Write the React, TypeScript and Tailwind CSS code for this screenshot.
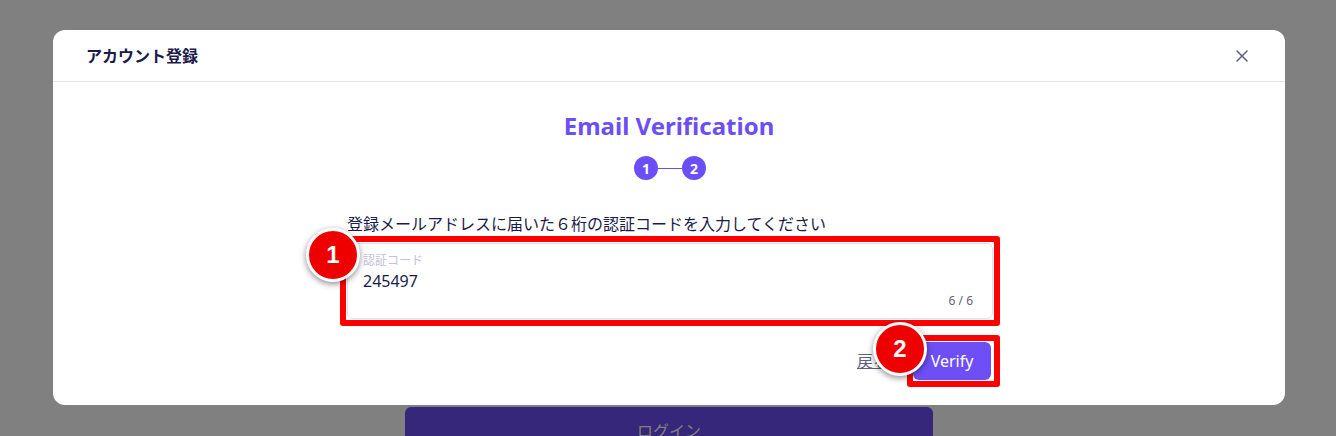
import React, { FC } from "react";

const FONT = { fontFamily: '"Noto Sans", "Noto Sans CJK JP", sans-serif' };

const Marker: FC<{ n: number; className: string }> = ({ n, className }) => (
  <div
    className={`absolute flex h-[54px] w-[54px] items-center justify-center rounded-full border-[3px] border-white bg-[#ee0000] shadow-[0_2px_6px_rgba(0,0,0,0.45)] ${className}`}
  >
    <span className="text-[24px] font-bold leading-none text-white" style={{ fontFamily: '"Liberation Sans", Arial, sans-serif' }}>
      {n}
    </span>
  </div>
);

const App: FC = () => {
  return (
    <div className="flex h-[436px] w-full flex-col items-start overflow-hidden bg-[#808080] pl-[53px]" style={FONT}>
      <div className="mt-[30px] w-[1232px] rounded-[12px] bg-white">
        {/* header */}
        <div className="flex h-[52px] items-center justify-between border-b border-[#e6e4f4] pl-[33px] pr-[36px]">
          <span className="text-[16px] font-bold text-[#1b1a4a]">アカウント登録</span>
          <svg width="14" height="14" viewBox="0 0 14 14" className="text-[#5b5f80]">
            <path d="M2 2L12 12M12 2L2 12" stroke="currentColor" strokeWidth="1.5" strokeLinecap="round" />
          </svg>
        </div>

        {/* body */}
        <div className="flex flex-col items-center pb-[25px] pt-[28px]">
          <h2 className="text-[24px] font-bold leading-[32px] text-[#6c4ef6]">Email Verification</h2>

          <div className="ml-[2px] mt-[14px] flex items-center">
            <div className="flex h-[24px] w-[24px] items-center justify-center rounded-full bg-[#6c4ef6] text-[14px] font-bold text-white">1</div>
            <div className="h-px w-[24px] bg-[#6c4ef6]" />
            <div className="flex h-[24px] w-[24px] items-center justify-center rounded-full bg-[#6c4ef6] text-[14px] font-bold text-white">2</div>
          </div>

          <div className="ml-[2px] mt-[33px] w-[646px]">
            <p className="text-[16px] leading-[22px] text-[#1b1a4a]">登録メールアドレスに届いた６桁の認証コードを入力してください</p>

            <div className="relative mt-[8px]">
              <div className="flex h-[76px] flex-col rounded-[6px] border border-[#e2e1f0] px-[15px] pt-[9px]">
                <span className="text-[12px] leading-[15px] text-[#c2c0dc]">認証コード</span>
                <span className="mt-[3px] text-[16px] leading-[21px] text-[#1b1a4a]">245497</span>
                <span className="mt-[1px] self-end pr-[4px] text-[12px] leading-[15px] text-[#5f6080]">6 / 6</span>
              </div>
              <div className="pointer-events-none absolute -inset-[7px] rounded-[3px] border-[6px] border-[#ff0000]" />
              <Marker n={1} className="-left-[41px] -top-[15px]" />
            </div>

            <div className="mt-[23px] flex items-center justify-end gap-[24px] pr-[2px]">
              <span className="text-[16px] text-[#5f6080] underline">戻る</span>
              <div className="relative">
                <button className="h-[38px] w-[78px] rounded-[6px] bg-[#6e4ff6] text-[16px] text-white">Verify</button>
                <div className="pointer-events-none absolute -bottom-[7px] -left-[6px] -right-[9px] -top-[7px] rounded-[3px] border-[6px] border-[#ff0000]" />
                <Marker n={2} className="-left-[40px] -top-[20px]" />
              </div>
            </div>
          </div>
        </div>
      </div>

      <div className="ml-[352px] mt-[2px] flex h-[40px] w-[528px] shrink-0 justify-center rounded-t-[6px] bg-[#37277a] pt-[12px]">
        <span className="text-[16px] text-[#808080]">ログイン</span>
      </div>
    </div>
  );
};

export default App;
